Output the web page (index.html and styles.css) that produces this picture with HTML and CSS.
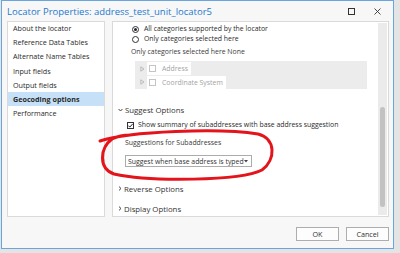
FILE: index.html
```html
<!DOCTYPE html>
<html lang="en">
<head>
    <meta charset="UTF-8">
    <title>Locator Properties</title>
    <link rel="stylesheet" href="styles.css">
</head>
<body>
    <div class="dialog">
        <div class="titlebar">
            <span class="title">Locator Properties: address_test_unit_locator5</span>
            <span class="win-btn">
                <svg width="7" height="7" viewBox="0 0 7 7"><rect x="0.5" y="0.5" width="6" height="6" fill="none" stroke="#333" stroke-width="1"/></svg>
            </span>
            <span class="win-btn close">
                <svg width="7" height="7" viewBox="0 0 7 7"><path d="M0.5 0.5 L6.5 6.5 M6.5 0.5 L0.5 6.5" stroke="#333" stroke-width="0.9"/></svg>
            </span>
        </div>

        <div class="main">
            <ul class="nav">
                <li>About the locator</li>
                <li>Reference Data Tables</li>
                <li>Alternate Name Tables</li>
                <li>Input fields</li>
                <li>Output fields</li>
                <li class="active">Geocoding options</li>
                <li>Performance</li>
            </ul>

            <div class="panel">
                <div class="content">
                    <div class="cats">
                        <div class="row radio-row">
                            <span class="radio checked"></span>All categories supported by the locator
                        </div>
                        <div class="row radio-row">
                            <span class="radio"></span>Only categories selected here
                        </div>
                        <div class="row note">Only categories selected here None</div>
                        <div class="tree">
                            <div class="tree-row">
                                <svg class="expander" width="5" height="6" viewBox="0 0 5 6"><path d="M0.8 0.8 L4 3 L0.8 5.2 Z" fill="none" stroke="#b0b0b0" stroke-width="0.8"/></svg>
                                <span class="tree-item"><span class="box"></span>Address</span>
                            </div>
                            <div class="tree-row">
                                <svg class="expander" width="5" height="6" viewBox="0 0 5 6"><path d="M0.8 0.8 L4 3 L0.8 5.2 Z" fill="none" stroke="#b0b0b0" stroke-width="0.8"/></svg>
                                <span class="tree-item"><span class="box"></span>Coordinate System</span>
                            </div>
                        </div>
                    </div>

                    <div class="section-head open">
                        <svg width="5" height="4" viewBox="0 0 5 4"><path d="M0.6 1 L2.5 3 L4.4 1" fill="none" stroke="#444" stroke-width="1"/></svg>
                        Suggest Options
                    </div>
                    <div class="section-body">
                        <div class="row check-row">
                            <span class="check">
                                <svg width="7" height="7" viewBox="0 0 7 7"><path d="M1.3 3.6 L2.8 5.1 L5.8 1.8" fill="none" stroke="#222" stroke-width="1"/></svg>
                            </span>
                            Show summary of subaddresses with base address suggestion
                        </div>
                        <div class="row field-label">Suggestions for Subaddresses</div>
                        <div class="select">
                            Suggest when base address is typed
                            <svg width="4" height="3" viewBox="0 0 4 3"><path d="M0 0 L4 0 L2 2.5 Z" fill="#444"/></svg>
                        </div>
                    </div>

                    <div class="section-head reverse">
                        <svg width="4" height="5" viewBox="0 0 4 5"><path d="M1 0.6 L3 2.5 L1 4.4" fill="none" stroke="#444" stroke-width="1"/></svg>
                        Reverse Options
                    </div>
                    <div class="section-head display">
                        <svg width="4" height="5" viewBox="0 0 4 5"><path d="M1 0.6 L3 2.5 L1 4.4" fill="none" stroke="#444" stroke-width="1"/></svg>
                        Display Options
                    </div>
                </div>

                <div class="scrollbar">
                    <svg width="5" height="4" viewBox="0 0 5 4"><path d="M0.6 3 L2.5 1 L4.4 3" fill="none" stroke="#888" stroke-width="0.8"/></svg>
                    <div class="track"><div class="thumb"></div></div>
                    <svg width="5" height="4" viewBox="0 0 5 4"><path d="M0.6 1 L2.5 3 L4.4 1" fill="none" stroke="#888" stroke-width="0.8"/></svg>
                </div>
            </div>
        </div>

        <div class="footer">
            <button class="btn">OK</button>
            <button class="btn">Cancel</button>
        </div>
    </div>

    <!-- hand-drawn markup over the screenshot -->
    <svg class="markup" width="400" height="253" viewBox="0 0 400 253">
        <path d="M100 141 C 130 131, 220 128, 258 134 C 276 138, 276 160, 262 170 C 240 181, 150 182, 114 174 C 98 168, 100 148, 112 139 C 118 136, 125 135, 130 135"
              fill="none" stroke="#e3141c" stroke-width="3" stroke-linecap="round"/>
    </svg>
</body>
</html>
```

FILE: styles.css
```css
* {
    box-sizing: border-box;
}
body {
    margin: 0;
    width: 400px;
    height: 253px;
    overflow: hidden;
    background: #e4e4e4;
    font-family: "Open Sans", "Noto Sans", sans-serif;
    font-size: 7.2px;
    color: #2a2a2a;
    position: relative;
}
.dialog {
    margin-left: 1px;
    width: 393px;
    height: 249px;
    border: 1px solid #6aa6de;
    background: #f7f7f7;
    display: flex;
    flex-direction: column;
}
.titlebar {
    height: 20px;
    display: flex;
    align-items: center;
    padding-left: 5px;
}
.title {
    flex: 1;
    color: #2477cf;
    font-size: 9.5px;
    white-space: nowrap;
}
.win-btn {
    width: 26px;
    display: flex;
    justify-content: center;
    align-items: center;
}
.win-btn.close {
    margin-right: 3px;
}
.main {
    display: flex;
    gap: 7px;
    padding-left: 5px;
    height: 196px;
}
.nav {
    list-style: none;
    margin: 0;
    padding: 0;
    width: 98px;
    background: #fff;
    border: 1px solid #dadada;
}
.nav li {
    height: 14.2px;
    line-height: 14.2px;
    padding-left: 5px;
    white-space: nowrap;
}
.nav li:first-child {
    margin-top: -1px;
}
.nav li.active {
    background: #c6e1f7;
    font-weight: bold;
}
.panel {
    width: 277px;
    background: #fff;
    border: 1px solid #dadada;
    display: flex;
}
.content {
    flex: 1;
    padding-left: 5px;
    white-space: nowrap;
    font-size: 6.9px;
}
.row {
    height: 10px;
    line-height: 10px;
    display: flex;
    align-items: center;
}
.cats {
    padding-left: 13px;
    padding-top: 2px;
}
.radio-row {
    margin-left: 1px;
}
.radio {
    width: 7px;
    height: 7px;
    border: 1px solid #333;
    border-radius: 50%;
    margin-right: 5px;
    display: flex;
    align-items: center;
    justify-content: center;
}
.radio.checked::after {
    content: "";
    width: 3px;
    height: 3px;
    border-radius: 50%;
    background: #222;
}
.note {
    margin-top: 3px;
    color: #3a3a3a;
}
.tree {
    margin-top: 4px;
    margin-left: 4px;
    width: 232px;
    height: 28px;
    background: #ececec;
    padding: 1px 0 0 5px;
}
.tree-row {
    height: 13.5px;
    display: flex;
    align-items: center;
    color: #a3a3a3;
}
.expander {
    margin-right: 2px;
}
.tree-item {
    background: #fff;
    height: 13px;
    display: flex;
    align-items: center;
    padding: 0 3px 0 2px;
}
.box {
    width: 7px;
    height: 7px;
    border: 1px solid #c4c4c4;
    margin-right: 6px;
}
.section-head {
    height: 11px;
    display: flex;
    align-items: center;
    gap: 2px;
    font-size: 7.8px;
    color: #333;
}
.section-head.open {
    margin-top: 15px;
}
.section-head.reverse {
    margin-top: 16px;
}
.section-head.display {
    margin-top: 9px;
}
.section-body {
    padding-left: 7px;
}
.check-row {
    margin-top: 5px;
    margin-left: 2px;
}
.check {
    width: 7px;
    height: 7px;
    border: 1px solid #333;
    margin-right: 4px;
    display: flex;
    align-items: center;
    justify-content: center;
}
.check svg {
    flex: none;
}
.field-label {
    margin-top: 8px;
    color: #3a3a3a;
}
.select {
    margin-top: 7px;
    width: 127px;
    height: 12px;
    border: 1px solid #acacac;
    display: flex;
    align-items: center;
    justify-content: space-between;
    padding: 0 3px 0 2px;
    color: #333;
}
.scrollbar {
    width: 9px;
    margin: 1px 1px 1px 0;
    background: #ebebeb;
    display: flex;
    flex-direction: column;
    align-items: center;
    padding: 3px 0;
}
.track {
    flex: 1;
    width: 100%;
    padding-top: 80px;
    padding-bottom: 5px;
    display: flex;
    justify-content: center;
}
.thumb {
    width: 5px;
    height: 100px;
    border-radius: 3px;
    background: #c2c2c2;
}
.footer {
    flex: 1;
    display: flex;
    justify-content: flex-end;
    gap: 7px;
    padding: 10px 4px 0 0;
}
.btn {
    width: 43px;
    height: 14px;
    border: 1px solid #adadad;
    background: #fdfdfd;
    font-family: "Open Sans", "Noto Sans", sans-serif;
    font-size: 7.2px;
    color: #333;
    padding: 0;
}
.markup {
    position: absolute;
    top: 0;
    left: 0;
    pointer-events: none;
}
```
